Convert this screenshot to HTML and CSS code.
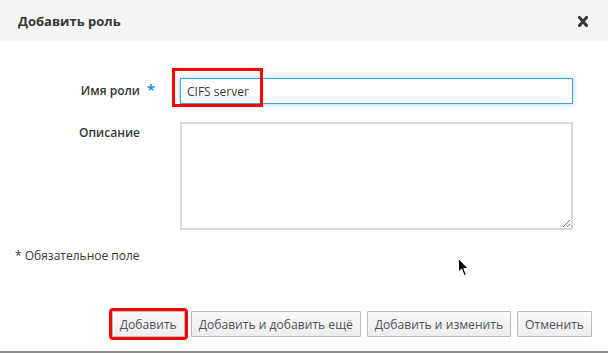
FILE: index.html
```html
<!DOCTYPE html>
<html>
<head>
    <meta charset="UTF-8">
    <title>Добавить роль</title>
    <link rel="stylesheet" href="styles.css">
</head>
<body>
    <div id="dialog">
        <div class="dialog-header">
            <h4>Добавить роль</h4>
            <span class="close">
                <svg width="10" height="11" viewBox="0 0 10 11"><path d="M1.5 1.5 L8.5 9.5 M8.5 1.5 L1.5 9.5" stroke="#363636" stroke-width="3" stroke-linecap="round"/></svg>
            </span>
        </div>
        <div class="dialog-body">
            <div class="form-row">
                <label class="required">Имя роли</label>
                <div class="control">
                    <input type="text" value="CIFS server">
                    <!-- highlight box around the value -->
                    <div class="mark"></div>
                </div>
            </div>
            <div class="form-row">
                <label class="top">Описание</label>
                <div class="control">
                    <textarea></textarea>
                </div>
            </div>
            <p class="note">* Обязательное поле</p>
        </div>
        <div class="dialog-footer">
            <button class="marked">Добавить</button>
            <button>Добавить и добавить ещё</button>
            <button>Добавить и изменить</button>
            <button>Отменить</button>
        </div>
        <svg class="cursor" width="12" height="19" viewBox="0 0 12 19"><path d="M0.5 0.5 L0.5 14 L3.6 11 L6.2 17.6 L8.3 16.7 L5.8 10.5 L10 10.5 Z" fill="#000" stroke="#fff" stroke-width="1"/></svg>
    </div>
</body>
</html>
```

FILE: styles.css
```css
body {
    margin: 0;
    font-family: "Open Sans", "Liberation Sans", sans-serif;
    font-size: 12px;
    color: #363636;
    background-color: #fff;
}

#dialog {
    position: relative;
    width: 608px;
    height: 353px;
    display: flex;
    flex-direction: column;
    box-sizing: border-box;
    border-bottom: 2px solid #8a8a8a;
}

.dialog-header {
    height: 42px;
    background-color: #f5f5f5;
    display: flex;
    align-items: center;
    justify-content: space-between;
    padding: 0 20px 0 18px;
    box-sizing: border-box;
}

.dialog-header h4 {
    margin: 0;
    font-size: 13px;
    font-weight: 700;
    color: #363636;
}

.close {
    display: flex;
    margin-top: 1px;
}

.dialog-body {
    flex: 1;
    padding-top: 36px;
}

.form-row {
    display: grid;
    grid-template-columns: 180px 393px;
    margin-bottom: 18px;
}

.form-row label {
    font-weight: 600;
    text-align: right;
    padding-right: 40px;
    line-height: 25px;
    position: relative;
}

.form-row label.top {
    line-height: 18px;
    padding-top: 2px;
}

.required::after {
    content: "*";
    position: absolute;
    right: 25px;
    top: -1px;
    color: #0088ce;
    font-size: 15px;
}

.control {
    position: relative;
}

input[type="text"] {
    width: 100%;
    height: 26px;
    box-sizing: border-box;
    border: 1px solid #39a5dc;
    padding: 0 6px;
    font-family: inherit;
    font-size: 12px;
    color: #363636;
    outline: none;
    box-shadow: 0 0 6px rgba(57, 165, 220, 0.45);
}

textarea {
    display: block;
    width: 100%;
    height: 108px;
    box-sizing: border-box;
    border: 2px solid #dadada;
    resize: vertical;
    font-family: inherit;
}

.mark {
    position: absolute;
    left: -8px;
    top: -10px;
    width: 91px;
    height: 39px;
    border: 3px solid #f00;
    box-sizing: border-box;
}

.note {
    margin: 0 0 0 15px;
    line-height: 16px;
    color: #363636;
}

.dialog-footer {
    display: flex;
    justify-content: flex-end;
    gap: 6px;
    padding: 0 16px 14px 0;
}

button {
    height: 26px;
    padding: 0 7px;
    font-family: inherit;
    font-size: 12.1px;
    color: #4d5258;
    background: linear-gradient(#fafafa, #ededed);
    border: 1px solid #bbb;
    border-radius: 1px;
}

button.marked {
    outline: 3px solid #f00;
}

.cursor {
    position: absolute;
    left: 458px;
    top: 258px;
}
```
